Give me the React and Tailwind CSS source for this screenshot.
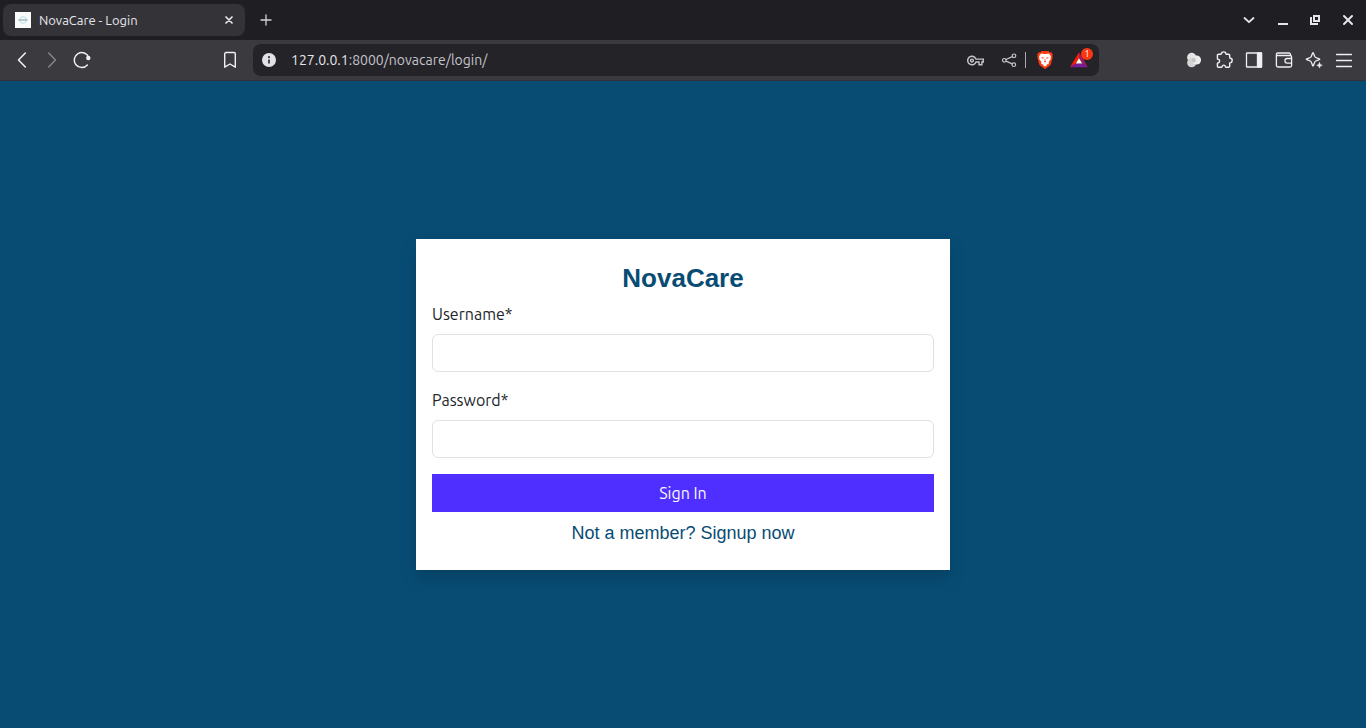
import React from "react";
import { MdOutlineVpnKey } from "react-icons/md";

const stroke = {
  fill: "none",
  stroke: "currentColor",
  strokeLinecap: "round",
  strokeLinejoin: "round",
};

function IconButton({ label, className = "", children }) {
  return (
    <button type="button" aria-label={label} className={`flex shrink-0 items-center justify-center ${className}`}>
      {children}
    </button>
  );
}

function Icon({ children, width = 1.5, size = "size-5" }) {
  return (
    <svg viewBox="0 0 20 20" className={size} {...stroke} strokeWidth={width} aria-hidden="true">
      {children}
    </svg>
  );
}

function TabStrip() {
  return (
    <header className="flex h-10 items-center bg-[#1f1e23] px-[3px] text-[#e6e5ec]">
      <div className="flex h-8 w-[242px] items-center rounded-lg bg-[#343338] px-3">
        <svg viewBox="0 0 16 16" className="size-4 shrink-0" aria-hidden="true">
          <rect width="16" height="16" fill="#fafafa" />
          <circle cx="8" cy="8" r="3.3" fill="none" stroke="#b9e2e2" strokeWidth="1" />
          <path d="M3.5 8h9" stroke="#9fb1b5" strokeWidth="1.4" />
        </svg>
        <span className="ml-2 flex-1 truncate text-[13px] leading-4">NovaCare - Login</span>
        <IconButton label="Close tab" className="h-5 w-2">
          <svg viewBox="0 0 8 8" className="size-2" {...stroke} strokeWidth="1.7" aria-hidden="true">
            <path d="M1 1l6 6M7 1L1 7" />
          </svg>
        </IconButton>
      </div>
      <IconButton label="New tab" className="ml-[11px] size-5">
        <Icon width={1.3}>
          <path d="M10 5v10M5 10h10" stroke="#d4d3d9" />
        </Icon>
      </IconButton>
      <div className="ml-auto flex items-center gap-3 pr-[5px]">
        <IconButton label="Search tabs" className="mr-[2px] size-5">
          <Icon width={1.8}>
            <path d="M5.5 8l4.500 4.200L14.500 8" />
          </Icon>
        </IconButton>
        <IconButton label="Minimize" className="size-5">
          <Icon>
            <path d="M5 14h10" strokeWidth="2" strokeLinecap="butt" />
          </Icon>
        </IconButton>
        <IconButton label="Restore" className="size-5">
          <Icon>
            <path d="M9 6h5v5H9zM6 7v7h7" strokeWidth="2" strokeLinecap="butt" strokeLinejoin="miter" />
          </Icon>
        </IconButton>
        <IconButton label="Close window" className="ml-px size-5">
          <Icon width={2}>
            <path d="M6 6l8 8M14 6l-8 8" />
          </Icon>
        </IconButton>
      </div>
    </header>
  );
}

function BraveLogo() {
  return (
    <svg viewBox="0 0 16 18" className="h-[18px] w-4" aria-hidden="true">
      <path
        fill="#fb3b12"
        d="M4.600 0h6.800l1.500 1.500 1.400-.2 1.500 2-.5 1.500.5 1.300-2 7.100c-.2.700-.6 1.200-1.200 1.600L8.900 17.500c-.6.500-1.200.5-1.800 0L3.400 14.800c-.6-.4-1-.9-1.200-1.600L.2 6.100l.5-1.300-.5-1.500 1.500-2 1.400.2z"
      />
      <path
        fill="#fff"
        d="M4.900 2.500l1.700.4h2.800l1.700-.4 1.300.5 1.600 2.500-.4.900.3 1.300-2.200 3.200.2 1.300-.7 1-1 .1-.6.500.4.500L8 15.500l-2-1.200.4-.5-.6-.5-1-.1-.7-1 .2-1.300L2.100 7.700l.3-1.300-.4-.9 1.600-2.500z"
      />
      <path
        fill="#fb3b12"
        d="M4.200 6.300l2.500.3-.4 1.100-1.500-.4zM11.800 6.300l-2.500.3.4 1.100 1.500-.4zM7.600 8h.8l-.1 2 .9.600L8 11.400l-1.200-.8.900-.6z"
      />
    </svg>
  );
}

function AddressBar() {
  return (
    <div className="flex h-8 min-w-0 items-center rounded-lg bg-[#242328] pl-[6px] pr-[10px] text-[#c5c4cb]">
      <IconButton label="View site information" className="size-5">
        <Icon>
          <circle cx="10" cy="10" r="7" fill="#e3e1e8" stroke="none" />
          <path d="M10 9.500v4" stroke="#38373c" strokeWidth="1.800" strokeLinecap="butt" />
          <circle cx="10" cy="7.200" r="1.100" fill="#38373c" stroke="none" />
        </Icon>
      </IconButton>
      <a href="#login" className="ml-3 flex-1 truncate text-[14px] leading-5">
        <span className="text-[#e6e5ec]">127.0.0.1</span>:8000/novacare/login/
      </a>
      <IconButton label="Manage passwords" className="size-5">
        <MdOutlineVpnKey className="size-[17px]" />
      </IconButton>
      <IconButton label="Share this page" className="ml-[14px] size-5">
        <Icon width={1.2}>
          <circle cx="15" cy="5.800" r="1.800" />
          <circle cx="5.300" cy="10.300" r="1.800" />
          <circle cx="14.800" cy="14.700" r="1.800" />
          <path d="M7 9.500l6.300-2.900M7 11.100l6.200 2.800" />
        </Icon>
      </IconButton>
      <span className="ml-[6px] h-4 w-px bg-[#a9a8ae]" />
      <IconButton label="Brave Shields" className="ml-[9px] size-5">
        <BraveLogo />
      </IconButton>
      <IconButton label="Brave Rewards" className="relative ml-[14px] size-5">
        <svg viewBox="0 0 20 20" className="size-5" aria-hidden="true">
          <path d="M10 2.300L1 17.200l5.800-3.600L10 8.200z" fill="#ff1a00" />
          <path d="M1 17.200h18l-5.800-3.600H6.800z" fill="#7a1b9a" />
          <path d="M19 17.200L10 2.300v5.900l3.200 5.400z" fill="#9e1f63" />
          <path d="M10 8.200l3.200 5.400H6.800z" fill="#fff" />
        </svg>
        <span className="absolute -top-[2px] left-3 flex size-3 items-center justify-center rounded-full bg-[#fc3610] text-[9px] leading-3 text-white">
          1
        </span>
      </IconButton>
    </div>
  );
}

function Toolbar() {
  return (
    <nav
      aria-label="Browser toolbar"
      className="grid h-[41px] grid-cols-[253px_minmax(0,1fr)_267px] items-center border-b border-[#323136] bg-[#3b3a3f] text-[#f0eff4]"
    >
      <div className="flex items-center gap-[10px] pl-3 pr-[13px]">
        <IconButton label="Back" className="size-5">
          <Icon width={1.600}>
            <path d="M13.300 3L6.500 10l6.800 7" />
          </Icon>
        </IconButton>
        <IconButton label="Forward" className="size-5 text-[#85848a]">
          <Icon>
            <path d="M6.700 3l6.800 7-6.800 7" />
          </Icon>
        </IconButton>
        <IconButton label="Reload" className="size-5">
          <Icon>
            <path d="M15.400 15A7.500 7.500 0 1 1 16.800 7.500" />
            <circle cx="16.300" cy="8" r="2.200" fill="currentColor" stroke="none" />
          </Icon>
        </IconButton>
        <IconButton label="Bookmark this page" className="ml-auto size-5">
          <Icon width={1.400}>
            <path d="M6 2.500h8a1.300 1.300 0 0 1 1.300 1.300v13.400L10 14l-5.300 3.200V3.800A1.300 1.300 0 0 1 6 2.500z" />
          </Icon>
        </IconButton>
      </div>
      <AddressBar />
      <div className="flex items-center justify-end gap-[10px] pr-3">
        <IconButton label="Profile extension" className="size-5">
          <Icon>
            <g stroke="none" fill="#e4e4e4">
              <circle cx="7.700" cy="7.400" r="4.600" />
              <circle cx="7.700" cy="12.700" r="4.600" fill="#d4d4d4" />
              <circle cx="12.500" cy="10" r="4.600" fill="#ededed" />
              <ellipse cx="9.800" cy="10" rx="2" ry="2.600" fill="#c4c4c4" />
            </g>
          </Icon>
        </IconButton>
        <IconButton label="Extensions" className="size-5">
          <Icon width={1.400}>
            <path d="M4.500 4.300h2.400c.4 0 .6-.3.600-.7.100-2.300 4.200-2.300 4.300 0 0 .4.200.7.600.700h2.200c.7 0 1.100.4 1.100 1.100v2.200c0 .4.300.6.700.700 2.400.1 2.400 4.100 0 4.300-.4 0-.7.200-.7.600v3c0 .7-.4 1.100-1.100 1.100h-2.500c-.4 0-.6-.3-.7-.7-.3-2-3-2-3.300 0-.1.400-.3.700-.7.700H4.500c-.7 0-1.100-.4-1.100-1.100v-2.500c0-.4.200-.6.600-.7 2.200-.3 2.200-3.500 0-3.800-.4-.1-.6-.3-.6-.7V5.400c0-.7.400-1.100 1.100-1.100z" />
          </Icon>
        </IconButton>
        <IconButton label="Side panel" className="size-5">
          <Icon width={1.300}>
            <rect x="2.500" y="3" width="15" height="14" rx="0.600" />
            <path d="M13.500 3h4v14h-4z" fill="currentColor" />
          </Icon>
        </IconButton>
        <IconButton label="Wallet" className="size-5">
          <Icon width={1.300}>
            <path d="M16.500 5.300V4.500A1.500 1.500 0 0 0 15 3H3.800a1.500 1.500 0 0 0-1.400 1.500v10.800A1.700 1.700 0 0 0 4.100 17h12a1.500 1.500 0 0 0 1.500-1.500V7A1.500 1.500 0 0 0 16.100 5.500H3" />
            <path d="M17.500 8.500h-4.300a2.300 2.300 0 0 0 0 4.600h4.300" />
          </Icon>
        </IconButton>
        <IconButton label="Leo AI" className="size-5">
          <Icon width={1.300}>
            <path d="M9 2.600c.7 0 1 3.200 2.200 4.500 1.200 1.200 4.700 1.300 4.700 2.100s-3.500 1-4.700 2.200C10 12.700 9.700 16 9 16s-1-3.300-2.200-4.600C5.600 10.200 2.200 10 2.200 9.200s3.400-.9 4.600-2.100C8 5.800 8.300 2.600 9 2.600z" />
            <path d="M15.500 12.500l.8 2 2 .8-2 .8-.8 2-.8-2-2-.8 2-.8z" fill="currentColor" strokeWidth="0.500" />
          </Icon>
        </IconButton>
        <IconButton label="Menu" className="size-5">
          <Icon width={1.300}>
            <path d="M2.500 4.500h15M2.500 10.500h15M2.500 16.500h15" />
          </Icon>
        </IconButton>
      </div>
    </nav>
  );
}

function Field({ id, label, type }) {
  return (
    <div className="mb-4">
      <label htmlFor={id} className="mb-2 block">
        {label}
      </label>
      <input
        id={id}
        name={id}
        type={type}
        required
        className="block h-[38px] w-full rounded-md border border-[#dee2e6] bg-white px-3"
      />
    </div>
  );
}

function LoginCard() {
  return (
    <form
      id="login"
      className="w-full max-w-[534px] bg-white px-4 py-6 text-[16px] leading-6 text-[#212529] shadow-[0_8px_16px_rgba(0,0,0,0.15)]"
    >
      <h1 className="mb-2 text-center font-['Liberation_Sans',Arial,sans-serif] text-[26px] font-bold leading-[31px] text-[#084c74]">
        NovaCare
      </h1>
      <Field id="username" label="Username*" type="text" />
      <Field id="password" label="Password*" type="password" />
      <button type="submit" className="block h-[38px] w-full bg-[#4f2fff] text-[#f8f9fa]">
        Sign In
      </button>
      <p className="mt-2 text-center font-['Liberation_Sans',Arial,sans-serif] text-[18px] leading-[26px] text-[#084c74]">
        <a href="#signup">Not a member? Signup now</a>
      </p>
    </form>
  );
}

export default function App() {
  return (
    <div className="flex min-h-screen flex-col bg-[#084c74] font-['Ubuntu','Open_Sans','Noto_Sans',sans-serif]">
      <TabStrip />
      <Toolbar />
      <main className="flex flex-1 items-center justify-center">
        <LoginCard />
      </main>
    </div>
  );
}
